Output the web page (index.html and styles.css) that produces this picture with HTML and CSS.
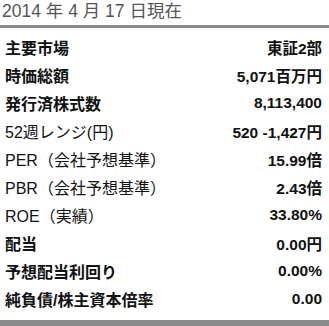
FILE: index.html
```html
<!DOCTYPE html>
<html lang="ja">
<head>
<meta charset="utf-8">
<link rel="stylesheet" href="styles.css">
</head>
<body>
<div class="panel">
  <div class="date">2014 年 4 月 17 日現在</div>
  <div class="bar"></div>
  <div class="rows">
    <div class="row"><span class="label b">主要市場</span><span class="val">東証2部</span></div>
    <div class="row"><span class="label b">時価総額</span><span class="val">5,071百万円</span></div>
    <div class="row"><span class="label b">発行済株式数</span><span class="val">8,113,400</span></div>
    <div class="row"><span class="label">52週レンジ(円)</span><span class="val">520 -1,427円</span></div>
    <div class="row"><span class="label">PER（会社予想基準）</span><span class="val">15.99倍</span></div>
    <div class="row"><span class="label">PBR（会社予想基準）</span><span class="val">2.43倍</span></div>
    <div class="row"><span class="label">ROE（実績）</span><span class="val">33.80%</span></div>
    <div class="row"><span class="label b">配当</span><span class="val">0.00円</span></div>
    <div class="row"><span class="label b">予想配当利回り</span><span class="val">0.00%</span></div>
    <div class="row"><span class="label b">純負債/株主資本倍率</span><span class="val">0.00</span></div>
  </div>
  <div class="bar bottom"></div>
</div>
</body>
</html>
```
FILE: styles.css
```css
html, body {
  margin: 0;
  padding: 0;
  background: #fff;
}
.panel {
  width: 329px;
  font-family: "Liberation Sans", "Noto Sans CJK JP", sans-serif;
  color: #111;
}
.date {
  height: 25px;
  line-height: 23px;
  padding-left: 2px;
  font-size: 17.5px;
  color: #555;
  white-space: nowrap;
}
.bar {
  height: 3px;
  background: #8a8a8a;
}
.bar.bottom {
  height: 6px;
}
.rows {
  padding: 5px 7px 7px 5px;
}
.row {
  height: 28px;
  display: flex;
  justify-content: space-between;
  align-items: center;
  white-space: nowrap;
}
.label {
  font-size: 16px;
  font-weight: normal;
}
.label.b {
  font-weight: bold;
}
.val {
  font-size: 15.5px;
  font-weight: bold;
}
```
